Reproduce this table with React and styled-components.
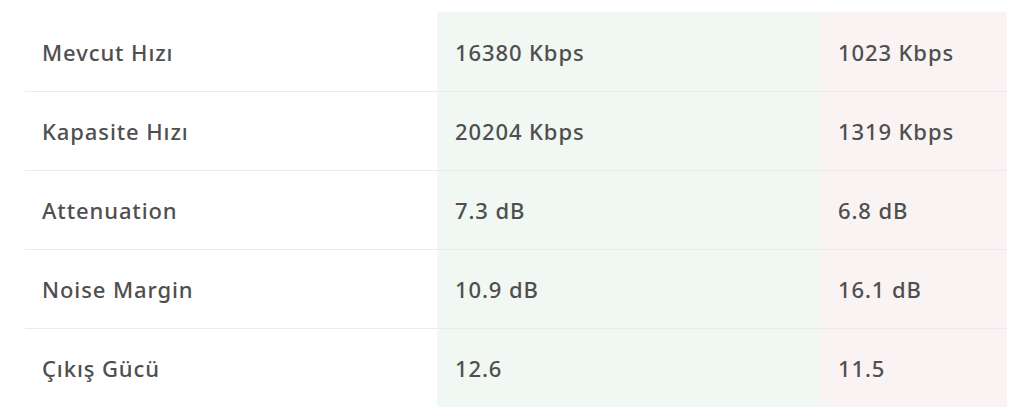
import React from "react";
import styled, { createGlobalStyle } from "styled-components";

const GlobalStyle = createGlobalStyle`
  html, body {
    margin: 0;
    padding: 0;
    background: #ffffff;
  }
  body {
    font-family: "Noto Sans", "Open Sans", sans-serif;
  }
`;

const Page = styled.div`
  width: 1024px;
  height: 418px;
  padding: 12px 17px 0 25px;
  box-sizing: border-box;
  background: #fff;
`;

const Table = styled.div`
  display: grid;
  grid-template-columns: 412px 382px 188px;
  width: 982px;
`;

const tones = {
  label: "#ffffff",
  down: "#f1f7f3",
  up: "#faf3f3",
};

const Cell = styled.div`
  height: 79px;
  box-sizing: border-box;
  display: flex;
  align-items: center;
  padding-left: ${(p) => (p.$tone === "label" ? "17px" : p.$tone === "down" ? "18px" : "19px")};
  background: ${(p) => tones[p.$tone]};
  border-top: ${(p) => (p.$first ? "none" : "1px solid #e9ebea")};
  font-size: 22px;
  font-weight: 500;
  letter-spacing: 0.9px;
  color: #4f4f4f;
  white-space: nowrap;
`;

const rows = [
  ["Mevcut Hızı", "16380 Kbps", "1023 Kbps"],
  ["Kapasite Hızı", "20204 Kbps", "1319 Kbps"],
  ["Attenuation", "7.3 dB", "6.8 dB"],
  ["Noise Margin", "10.9 dB", "16.1 dB"],
  ["Çıkış Gücü", "12.6", "11.5"],
];

export default function App() {
  return (
    <>
      <GlobalStyle />
      <Page>
        <Table>
          {rows.map(([label, down, up], i) => (
            <React.Fragment key={label}>
              <Cell $tone="label" $first={i === 0}>{label}</Cell>
              <Cell $tone="down" $first={i === 0}>{down}</Cell>
              <Cell $tone="up" $first={i === 0}>{up}</Cell>
            </React.Fragment>
          ))}
        </Table>
      </Page>
    </>
  );
}
